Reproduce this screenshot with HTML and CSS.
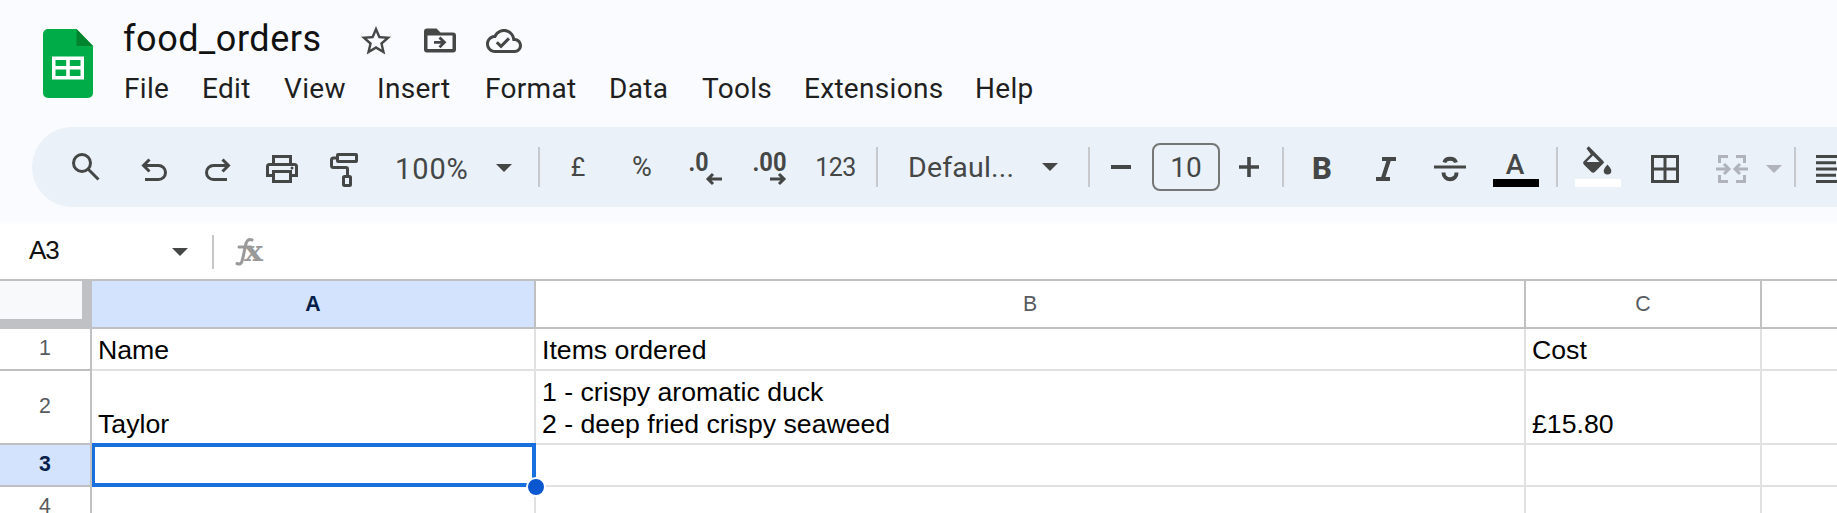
FILE: index.html
```html
<!DOCTYPE html>
<html lang="en">
<head>
<meta charset="utf-8">
<title>food_orders</title>
<link rel="stylesheet" href="styles.css">
</head>
<body>
<header class="header">
  <svg class="logo" viewBox="0 0 50 69">
    <path fill="#00ac47" d="M5 0h28.500l16.500 17v47a5 5 0 0 1-5 5H5a5 5 0 0 1-5-5V5a5 5 0 0 1 5-5z"/>
    <path fill="#00832d" d="M33.500 0L50 17H33.500z"/>
    <path fill="#fff" fill-rule="evenodd" d="M9 27.500h32v23H9zM12.500 31v6h10.700v-6zM26.800 31v6h10.700v-6zM12.500 40.500v6.500h10.700v-6.500zM26.800 40.500v6.500h10.700v-6.500z"/>
  </svg>
  <div class="heading">
    <div class="title-row">
      <span class="title">food_orders</span>
      <svg class="title-icon star" viewBox="0 0 24 24"><path d="M22 9.240l-7.190-.62L12 2 9.190 8.630 2 9.240l5.460 4.730L5.820 21 12 17.270 18.180 21l-1.630-7.030L22 9.240zM12 15.400l-3.760 2.270 1-4.280-3.320-2.880 4.380-.38L12 6.100l1.710 4.040 4.380.38-3.320 2.880 1 4.280L12 15.400z"/></svg>
      <svg class="title-icon folder" viewBox="0 0 32 24"><path fill-rule="evenodd" d="M3 0h9.500l4 4H29a3 3 0 0 1 3 3v14a3 3 0 0 1-3 3H3a3 3 0 0 1-3-3V3a3 3 0 0 1 3-3zM3.500 7v13.500h25V7z"/><path d="M10 12.400h7l-2.500-2.500 2-2 5.900 5.900-5.900 5.900-2-2 2.500-2.500H10z"/></svg>
      <svg class="title-icon cloud" viewBox="0 4 24 16"><path d="M19.350 10.040C18.670 6.590 15.640 4 12 4 9.110 4 6.600 5.640 5.350 8.040 2.340 8.360 0 10.910 0 14c0 3.310 2.690 6 6 6h13c2.760 0 5-2.240 5-5 0-2.640-2.050-4.780-4.650-4.960zM19 18H6c-2.210 0-4-1.790-4-4 0-2.050 1.530-3.760 3.560-3.970l1.070-.11.5-.95C8.080 7.140 9.940 6 12 6c2.620 0 4.880 1.860 5.390 4.430l.3 1.500 1.530.11c1.560.1 2.780 1.410 2.780 2.960 0 1.650-1.350 3-3 3zm-9-3.820l-2.090-2.090L6.500 13.500 10 17l6.010-6.010-1.410-1.410z"/></svg>
    </div>
    <nav class="menu">
      <span>File</span><span>Edit</span><span>View</span><span>Insert</span><span>Format</span><span>Data</span><span>Tools</span><span>Extensions</span><span>Help</span>
    </nav>
  </div>
</header>

<div class="toolbar">
  <div class="tool search"><svg viewBox="0 0 40 40"><g class="line"><circle cx="20" cy="16" r="8.500"/><path d="M26 22l10.500 10.500"/></g></svg></div>
  <div class="tool"><svg viewBox="1 0 40 40"><g class="line"><path d="M16.500 12.500L10.500 18.500l6 6M11 18.500h14.500a6.700 6.700 0 0 1 0 14H12"/></g></svg></div>
  <div class="tool"><svg viewBox="-1 0 40 40"><g class="line"><path d="M23.500 12.500l6 6-6 6M29 18.500H14.500a6.700 6.700 0 0 0 0 14H28"/></g></svg></div>
  <div class="tool"><svg viewBox="0 0 40 40"><path fill-rule="evenodd" d="M10 8h20v8h2.500a3.500 3.500 0 0 1 3.500 3.500V30h-6v6H10v-6H4V19.500A3.500 3.500 0 0 1 7.500 16H10zM13 11v5h14v-5zM7 19v8h3v-4h20v4h3v-8zM13 26v7h14v-7z"/><circle cx="30" cy="21" r="1.500"/></svg></div>
  <div class="tool"><svg viewBox="0 0 40 40"><g class="line"><rect x="11.500" y="7.500" width="19" height="7" rx=".5"/><path d="M11 11H7.500a2 2 0 0 0-2 2v5.500a2 2 0 0 0 2 2H20a1.500 1.500 0 0 1 1.500 1.500v6"/><rect x="17.500" y="29.500" width="7" height="9" rx="1"/></g></svg></div>
  <div class="label zoom">100%</div>
  <div class="tool dd-zoom"><i class="caret"></i></div>
  <i class="divider"></i>
  <div class="tool small"><span>£</span></div>
  <div class="tool small"><span class="percent">%</span></div>
  <div class="tool"><svg viewBox="0 0 40 40"><text class="digits" x="2.500" y="24" textLength="20" lengthAdjust="spacingAndGlyphs">.0</text><path class="line" d="M36 32H22.500M27 27l-5 5 5 5"/></svg></div>
  <div class="tool"><svg viewBox="0 0 40 40"><text class="digits" x="2.500" y="24" textLength="34" lengthAdjust="spacingAndGlyphs">.00</text><path class="line" d="M20 32h13.500M29 27l5 5-5 5"/></svg></div>
  <div class="tool small"><span class="number">123</span></div>
  <i class="divider"></i>
  <div class="label font">Defaul...</div>
  <div class="tool dd-font"><i class="caret"></i></div>
  <i class="divider"></i>
  <div class="tool"><svg viewBox="0 0 40 40"><path d="M10 18h20v4H10z"/></svg></div>
  <div class="tool"><span class="size-box">10</span></div>
  <div class="tool"><svg viewBox="0 0 40 40"><path d="M10 18.200h8.200V10h3.600v8.200H30v3.600h-8.200V30h-3.600v-8.200H10z"/></svg></div>
  <i class="divider"></i>
  <div class="tool"><svg viewBox="0 0 40 40"><text class="bold" x="10" y="32">B</text></svg></div>
  <div class="tool"><svg viewBox="0 0 40 40"><path d="M16 10h14v4h-5.300l-5.200 16H24v4H10v-4h5.200l5.200-16H16z"/></svg></div>
  <div class="tool"><svg viewBox="0 0 40 40"><path d="M4 18.500h32v3H4z"/><path class="line thick" d="M14.500 15.500c1-5 10-5 11.500 0M13.500 25.500c0 9 13.500 9 13 0"/></svg></div>
  <div class="tool color"><svg viewBox="0 0 46 40"><text class="letter" x="12.800" y="27">A</text><path fill="#000" d="M0 32h46v8H0z"/></svg></div>
  <i class="divider"></i>
  <div class="tool color"><svg viewBox="0 0 46 40"><path fill-rule="evenodd" d="M11.500 1.500L13.700-.7 28.500 14.200a1.500 1.500 0 0 1 0 2.100l-8.400 8.400a2.800 2.800 0 0 1-4 0l-7.300-7.300a2.200 2.200 0 0 1 0-3.100l7-7zM18 8.500L11.500 15h13z"/><path d="M32.500 17.500s3.800 4.200 3.800 6.200a3.800 3.800 0 0 1-7.600 0c0-2 3.800-6.200 3.800-6.200z"/><path fill="#fff" d="M0 32h46v8H0z"/></svg></div>
  <div class="tool"><svg viewBox="0 0 40 40"><path fill-rule="evenodd" d="M6 8h28v28H6zM9 11v9.500h9.500V11zM21.500 11v9.500H31V11zM9 23.500V33h9.500v-9.500zM21.500 23.500V33H31v-9.500z"/></svg></div>
  <div class="tool disabled"><svg viewBox="0 0 40 40"><g class="line"><path d="M7.500 16V9.500H16M24 9.500h8.500V16M7.500 28v6.500H16M24 34.500h8.500V28M4 22h12M12 17l5 5-5 5M36 22H24M28 17l-5 5 5 5"/></g></svg></div>
  <div class="tool disabled dd-merge"><i class="caret"></i></div>
  <i class="divider"></i>
  <div class="tool align"><svg viewBox="0 0 40 40"><path d="M0 8h28v3H0zM0 14.200h20v3H0zM0 20.400h28v3H0zM0 26.700h20v3H0zM0 33h28v3H0z"/></svg></div>
</div>

<div class="formula-bar">
  <span class="cell-name">A3</span>
  <i class="caret"></i>
  <i class="bar-divider"></i>
  <svg class="fx" viewBox="0 0 30 32"><path class="fx-f" d="M3 27.500c4 1.500 5-1 6-6l2.500-12c1-5 3-7 6.500-5.500M5 11h12"/><text class="fx-x" x="10" y="25" textLength="19" lengthAdjust="spacingAndGlyphs">x</text></svg>
</div>

<div class="sheet">
  <div class="corner"></div>
  <div class="col-head selected">A</div><div class="col-head">B</div><div class="col-head">C</div><div class="col-head"></div>
  <div class="row-head">1</div>
  <div class="cell">Name</div><div class="cell">Items ordered</div><div class="cell">Cost</div><div class="cell"></div>
  <div class="row-head">2</div>
  <div class="cell">Taylor</div><div class="cell">1 - crispy aromatic duck<br>2 - deep fried crispy seaweed</div><div class="cell">£15.80</div><div class="cell"></div>
  <div class="row-head selected">3</div>
  <div class="cell active"><span class="selection"></span><span class="handle"></span></div><div class="cell"></div><div class="cell"></div><div class="cell"></div>
  <div class="row-head">4</div>
  <div class="cell"></div><div class="cell"></div><div class="cell"></div><div class="cell"></div>
</div>
</body>
</html>
```
FILE: styles.css
```css
* { box-sizing: border-box; }
body {
  margin: 0;
  width: 1837px;
  height: 513px;
  overflow: hidden;
  background: #f9fbfe;
  color: #1f1f1f;
  font-family: Roboto, sans-serif;
}
svg { display: block; overflow: visible; fill: #444746; flex: none; }

.header { display: flex; height: 127px; padding-left: 43px; }
.logo { width: 50px; height: 69px; margin-top: 28.500px; }
.heading { padding-left: 30px; }
.title-row { display: flex; height: 66px; padding-top: 16px; }
.title { width: 238px; font-size: 36px; line-height: 47px; letter-spacing: .55px; color: #111; }
.title-icon { fill: #444746; }
.star { width: 36px; height: 36px; margin: 7px 0 0 -3px; }
.folder { width: 32px; height: 25px; margin: 12px 0 0 30px; }
.cloud { width: 36px; height: 24px; margin: 13px 0 0 30px; }
.menu {
  display: grid;
  grid-template-columns: 78px 82px 93px 108px 124px 93px 102px 171px 80px;
  padding: 1px 0 0 1px;
  font-size: 28px;
  line-height: 44px;
  letter-spacing: .3px;
}

.toolbar {
  display: grid;
  grid-template-columns: 72px repeat(4, 64px) 106px 48px 14px repeat(5, 64px) 22px 142px 56px 6px 58px 72px 54px 14px repeat(3, 64px) 68px 14px 68px 66px 68px 16px 26px 40px;
  align-items: center;
  width: 1805px;
  height: 80px;
  margin-left: 32px;
  padding-left: 18px;
  overflow: hidden;
  background: #ebf1f9;
  border-radius: 40px 0 0 40px;
  color: #444746;
}
.tool { display: flex; align-items: center; justify-content: center; height: 40px; }
.tool svg { width: 40px; height: 40px; }
.tool.color svg { width: 46px; }
.search { padding-right: 8px; }
.line { fill: none; stroke: #444746; stroke-width: 3; }
.thick { stroke-width: 4; }
.label { white-space: nowrap; }
.zoom { padding: 4px 0 0 17px; font-size: 29px; letter-spacing: .9px; }
.font { padding-left: 20px; font-size: 28.500px; letter-spacing: .2px; }
.small { font-size: 25px; }
.percent { font-size: 27px; }
.number { padding-left: 3px; letter-spacing: -.5px; }
.caret { width: 0; height: 0; border: 8px solid transparent; border-top-color: currentColor; border-bottom: 0; }
.dd-zoom { padding: 2px 8px 0 0; }
.dd-font { padding-right: 16px; }
.dd-merge { padding-top: 4px; }
.divider { justify-self: center; width: 2px; height: 40px; background: #c7c9cd; }
.digits { font: 700 25px Roboto, sans-serif; }
.bold { font: 800 31px Roboto, sans-serif; }
.letter { font: 500 28px Roboto, sans-serif; }
.size-box {
  width: 68px;
  height: 48px;
  flex: none;
  border: 2px solid #747775;
  border-radius: 8px;
  font-size: 28px;
  line-height: 45px;
  text-align: center;
}
.disabled { color: #b0b4ba; }
.disabled .line { stroke: #b0b4ba; }
.align { justify-content: flex-start; padding-left: 8px; }

.formula-bar {
  display: flex;
  align-items: center;
  height: 74px;
  padding: 16px 0 0 29px;
  background: linear-gradient(#f9fbfe 14px, #fff 18px);
  color: #444746;
}
.cell-name { width: 143px; margin-top: -4px; font: 26px/30px "Liberation Sans", Arial, sans-serif; color: #111; letter-spacing: -1px; }
.bar-divider { width: 2px; height: 34px; margin: 0 20px 0 24px; background: #c7c7c7; }
.fx { width: 30px; height: 32px; }
.fx-f { fill: none; stroke: #999; stroke-width: 3; stroke-linecap: round; }
.fx-x { font: 700 27px "DejaVu Serif", serif; fill: #999; }

.sheet {
  display: grid;
  grid-template-columns: 92px 444px 990px 236px 75px;
  grid-template-rows: 50px 42px 74px 42px 42px;
  margin-top: -2px;
  background: #fff;
  font-family: "Liberation Sans", Arial, sans-serif;
}
.corner {
  border-top: 2px solid #c0c0c0;
  border-right: 10px solid #c0c1c4;
  border-bottom: 10px solid #c0c1c4;
  background: #f8f9fa;
}
.col-head, .row-head {
  display: flex;
  align-items: center;
  justify-content: center;
  border-right: 2px solid #c0c0c3;
  border-bottom: 2px solid #c0c0c3;
  font-size: 21.300px;
  color: #575b5f;
}
.col-head { border-top: 2px solid #c0c0c0; }
.row-head { padding-bottom: 1px; }
.selected { background: #d3e3fd; color: #041e49; font-weight: 700; }
.cell {
  position: relative;
  display: flex;
  align-items: flex-end;
  padding: 0 0 3px 6px;
  border-right: 2px solid #e1e1e1;
  border-bottom: 2px solid #e1e1e1;
  font-size: 26.670px;
  line-height: 32px;
  white-space: nowrap;
  color: #000;
}
.col-head:nth-child(5), .cell:nth-child(5n) { border-right: 0; }
.selection { position: absolute; inset: -2px -2px -2px 0; border: 4px solid #1a6fde; border-left-width: 3px; }
.handle {
  position: absolute;
  right: -12px;
  bottom: -12px;
  width: 20px;
  height: 20px;
  border: 2px solid #fff;
  border-radius: 50%;
  background: #0b57d0;
}
.active { z-index: 1; }
```
